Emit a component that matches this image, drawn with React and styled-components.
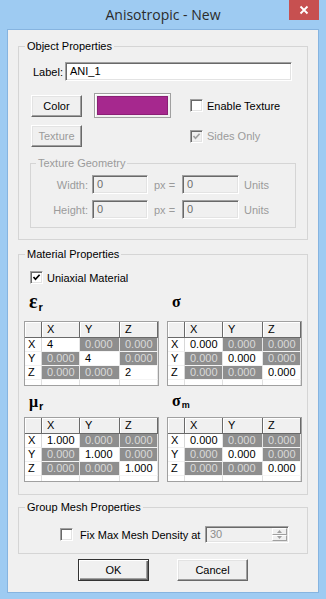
import React from "react";
import styled, { createGlobalStyle } from "styled-components";

const Global = createGlobalStyle`
  html, body { margin: 0; padding: 0; background: #9ecbf2; }
  body { font-family: "Liberation Sans", Arial, sans-serif; font-size: 11px; color: #000; }
  * { box-sizing: border-box; }
`;

const Window = styled.div`
  width: 326px;
  height: 599px;
  background: #9ecbf2;
  padding: 0 7px 6px;
  display: flex;
  flex-direction: column;
`;

const TitleBar = styled.div`
  height: 29px;
  flex: none;
  display: grid;
  grid-template-columns: 1fr auto 1fr;
  align-items: start;
`;

const Title = styled.div`
  grid-column: 2;
  font-family: "Open Sans", "Noto Sans", sans-serif;
  font-size: 14px;
  line-height: 29px;
  color: #2b2b2b;
  white-space: nowrap;
`;

const Close = styled.div`
  grid-column: 3;
  justify-self: end;
  width: 30px;
  height: 20px;
  background: #c75050;
  display: flex;
  align-items: center;
  justify-content: center;
`;

const Client = styled.div`
  flex: 1;
  background: #f0f0f0;
  border: 1px solid #86b4e0;
  padding: 10px 10px 0;
  display: flex;
  flex-direction: column;
`;

const Group = styled.fieldset`
  margin: ${(p) => p.$mt}px 0 0 ${(p) => p.$ml || 0}px;
  padding: 0 0 ${(p) => p.$pb}px;
  min-width: 0;
  width: ${(p) => (p.$w ? `${p.$w}px` : "auto")};
  border: 1px solid #d5d5d5;
`;

const Legend = styled.legend`
  margin-left: ${(p) => p.$ml ?? 6}px;
  padding: 0 2px;
  line-height: 13px;
  color: ${(p) => (p.$disabled ? "#9b9b9b" : "#000")};
`;

const LabelRow = styled.div`
  margin-top: 9px;
  padding: 0 14px;
  display: flex;
  align-items: center;
  height: 19px;
`;

const FieldLabel = styled.span`
  width: 32px;
  flex: none;
`;

const TextField = styled.div`
  width: ${(p) => p.$w}px;
  height: ${(p) => p.$h || 19}px;
  flex: none;
  background: ${(p) => (p.$disabled ? "#f0f0f0" : "#fff")};
  border: 1px solid;
  border-color: #a0a0a0 #fff #fff #a0a0a0;
  box-shadow: inset 1px 1px 0 #696969, inset -1px -1px 0 #e3e3e3;
  padding-left: 4px;
  line-height: ${(p) => (p.$h || 19) - 2}px;
  color: ${(p) => (p.$disabled ? "#6d6d6d" : "#000")};
  white-space: nowrap;
  overflow: hidden;
`;

const ControlGrid = styled.div`
  margin-top: 12px;
  padding-left: 12px;
  display: grid;
  grid-template-columns: 51px 77px 1fr;
  grid-template-rows: 25px 22px;
  column-gap: 12px;
  row-gap: 7px;
  align-items: center;
`;

const Button = styled.button`
  width: ${(p) => p.$w}px;
  height: 22px;
  margin: 0;
  padding: 0;
  font: inherit;
  background: #f0f0f0;
  border: 1px solid;
  border-color: ${(p) => (p.$default ? "#333" : "#fff #696969 #696969 #fff")};
  box-shadow: ${(p) =>
    p.$default
      ? "inset 1px 1px 0 #fff, inset -1px -1px 0 #696969, inset -2px -2px 0 #a0a0a0"
      : "inset -1px -1px 0 #a0a0a0, inset 1px 1px 0 #e3e3e3"};
  color: ${(p) => (p.disabled ? "#9b9b9b" : "#000")};
  display: flex;
  align-items: center;
  justify-content: center;
`;

const Swatch = styled.div`
  width: 77px;
  height: 25px;
  border: 1px solid #a0a0a0;
  box-shadow: inset 1px 1px 0 #fff;
  padding: 2px;
`;

const SwatchFill = styled.div`
  height: 100%;
  background: #a6288e;
  border: 1px solid #8a1f75;
`;

const CheckWrap = styled.label`
  display: flex;
  align-items: center;
  gap: ${(p) => p.$gap || 4}px;
  margin-left: ${(p) => p.$ml || 0}px;
  color: ${(p) => (p.$disabled ? "#9b9b9b" : "#000")};
  white-space: nowrap;
`;

const Box = styled.span`
  width: 13px;
  height: 13px;
  flex: none;
  background: ${(p) => (p.$disabled ? "#f0f0f0" : "#fff")};
  border: 1px solid;
  border-color: #a0a0a0 #fff #fff #a0a0a0;
  box-shadow: inset 1px 1px 0 #696969, inset -1px -1px 0 #e3e3e3;
  display: flex;
  align-items: center;
  justify-content: center;
`;

function Check({ label, checked, disabled, gap, ml }) {
  return (
    <CheckWrap $gap={gap} $ml={ml} $disabled={disabled}>
      <Box $disabled={disabled}>
        {checked && (
          <svg width="9" height="9" viewBox="0 0 9 9">
            <path
              d="M1.5 4 L3.5 6.3 L7.6 1.8"
              fill="none"
              stroke={disabled ? "#a0a0a0" : "#000"}
              strokeWidth="1.7"
            />
          </svg>
        )}
      </Box>
      <span>{label}</span>
    </CheckWrap>
  );
}

const GeoGrid = styled.div`
  margin-top: 5px;
  padding-bottom: 8px;
  display: grid;
  grid-template-columns: 61px 56px 34px 57px auto;
  grid-auto-rows: 19px;
  row-gap: 6px;
  align-items: center;
  color: #9b9b9b;
`;

const GeoLabel = styled.span`
  text-align: right;
  padding-right: 4px;
`;

const GeoText = styled.span`
  padding-left: ${(p) => p.$pl ?? 6}px;
`;

const CheckRow = styled.div`
  margin-top: 10px;
  padding-left: 11px;
  display: flex;
`;

const Quad = styled.div`
  padding-left: 5px;
  display: grid;
  grid-template-columns: 135px 135px;
  grid-template-rows: 37px 65px 31px 65px;
  column-gap: 8px;
`;

const SymCell = styled.div`
  display: flex;
  align-items: flex-end;
  padding: 0 0 ${(p) => p.$pb}px 5px;
`;

const Sym = styled.span`
  font-family: "Liberation Serif", "DejaVu Serif", serif;
  font-weight: bold;
  font-size: ${(p) => p.$size || 16}px;
  line-height: 20px;
  color: #000;
`;

const Sub = styled.span`
  font-family: "Liberation Sans", Arial, sans-serif;
  font-weight: bold;
  font-size: ${(p) => p.$size || 11}px;
  line-height: 0;
  vertical-align: -${(p) => p.$drop ?? 3}px;
  margin-left: 1px;
`;

const Table = styled.div`
  width: 135px;
  height: 65px;
  display: grid;
  grid-template-columns: 17px 38px 40px 38px;
  grid-template-rows: 16px repeat(3, 14px) 5px;
  border: 1px solid #a0a0a0;
  background: #fff;
  overflow: hidden;
`;

const HeadCell = styled.div`
  background: #f0f0f0;
  box-shadow: inset 1px 1px 0 #fff;
  border-right: 1px solid #696969;
  border-bottom: 1px solid #696969;
  padding-left: 5px;
  line-height: 15px;
`;

const RowHead = styled.div`
  border-right: 1px solid #d8d8d8;
  border-bottom: 1px solid #f0f0f0;
  padding-left: 3px;
  line-height: 13px;
`;

const Cell = styled.div`
  background: ${(p) => (p.$gray ? "#8e8e8e" : "#fff")};
  color: ${(p) => (p.$gray ? "#dadada" : "#000")};
  border-right: 1px solid #e6e6e6;
  border-bottom: 1px solid #f4f4f4;
  padding-left: 5px;
  line-height: 13px;
  white-space: nowrap;
  overflow: hidden;
`;

const Filler = styled.div`
  border-right: 1px solid #e0e0e0;
`;

function Matrix({ diag }) {
  const axes = ["X", "Y", "Z"];
  return (
    <Table>
      <HeadCell />
      {axes.map((a) => (
        <HeadCell key={a}>{a}</HeadCell>
      ))}
      {axes.map((r, i) => (
        <React.Fragment key={r}>
          <RowHead>{r}</RowHead>
          {axes.map((c, j) => (
            <Cell key={c} $gray={i !== j}>
              {i === j ? diag[i] : "0.000"}
            </Cell>
          ))}
        </React.Fragment>
      ))}
      <Filler />
      <Filler />
      <Filler />
      <Filler />
    </Table>
  );
}

const MeshRow = styled.div`
  margin-top: 12px;
  padding: 0 18px 0 41px;
  height: 17px;
  display: flex;
  align-items: center;
`;

const Spin = styled.div`
  margin-left: auto;
  width: 84px;
  height: 17px;
  background: #f0f0f0;
  border: 1px solid;
  border-color: #a0a0a0 #fff #fff #a0a0a0;
  box-shadow: inset 1px 1px 0 #696969, inset -1px -1px 0 #e3e3e3;
  display: flex;
  align-items: stretch;
  padding: 1px 1px 1px 0;
`;

const SpinText = styled.span`
  flex: 1;
  padding-left: 4px;
  line-height: 13px;
  color: #8d8d8d;
`;

const SpinButtons = styled.div`
  width: 15px;
  display: flex;
  flex-direction: column;
`;

const SpinBtn = styled.div`
  flex: 1;
  background: #f0f0f0;
  border: 1px solid;
  border-color: #fff #a0a0a0 #a0a0a0 #fff;
  display: flex;
  align-items: center;
  justify-content: center;
`;

const ButtonRow = styled.div`
  margin-top: 5px;
  display: flex;
  justify-content: center;
  gap: 28px;
`;

export default function App() {
  return (
    <>
      <Global />
      <Window>
        <TitleBar>
          <Title>Anisotropic - New</Title>
          <Close>
            <svg width="10" height="10" viewBox="0 0 10 10">
              <path d="M1.5 1.5L8.5 8.5M8.5 1.5L1.5 8.5" stroke="#fff" strokeWidth="1.8" />
            </svg>
          </Close>
        </TitleBar>
        <Client>
          <Group $mt={0} $pb={11}>
            <Legend>Object Properties</Legend>
            <LabelRow>
              <FieldLabel>Label:</FieldLabel>
              <TextField $w={227}>ANI_1</TextField>
            </LabelRow>
            <ControlGrid>
              <Button $w={51}>Color</Button>
              <Swatch>
                <SwatchFill />
              </Swatch>
              <Check label="Enable Texture" ml={7} />
              <Button $w={51} disabled>
                Texture
              </Button>
              <span />
              <Check label="Sides Only" checked disabled ml={7} />
            </ControlGrid>
            <Group $mt={10} $ml={11} $w={266} $pb={0}>
              <Legend $disabled $ml={5}>
                Texture Geometry
              </Legend>
              <GeoGrid>
                <GeoLabel>Width:</GeoLabel>
                <TextField $w={56} $disabled>0</TextField>
                <GeoText>px =</GeoText>
                <TextField $w={57} $disabled>0</TextField>
                <GeoText $pl={5}>Units</GeoText>
                <GeoLabel>Height:</GeoLabel>
                <TextField $w={56} $disabled>0</TextField>
                <GeoText>px =</GeoText>
                <TextField $w={57} $disabled>0</TextField>
                <GeoText $pl={5}>Units</GeoText>
              </GeoGrid>
            </Group>
          </Group>

          <Group $mt={8} $pb={12}>
            <Legend>Material Properties</Legend>
            <CheckRow>
              <Check label="Uniaxial Material" checked />
            </CheckRow>
            <Quad>
              <SymCell $pb={10}>
                <Sym $size={20}>
                  ε<Sub>r</Sub>
                </Sym>
              </SymCell>
              <SymCell $pb={9}>
                <Sym $size={16}>σ</Sym>
              </SymCell>
              <Matrix diag={["4", "4", "2"]} />
              <Matrix diag={["0.000", "0.000", "0.000"]} />
              <SymCell $pb={5}>
                <Sym $size={16}>
                  μ<Sub>r</Sub>
                </Sym>
              </SymCell>
              <SymCell $pb={6}>
                <Sym $size={16}>
                  σ<Sub $size={9} $drop={2}>m</Sub>
                </Sym>
              </SymCell>
              <Matrix diag={["1.000", "1.000", "1.000"]} />
              <Matrix diag={["0.000", "0.000", "0.000"]} />
            </Quad>
          </Group>

          <Group $mt={6} $pb={10}>
            <Legend>Group Mesh Properties</Legend>
            <MeshRow>
              <Check label="Fix Max Mesh Density at" gap={7} />
              <Spin>
                <SpinText>30</SpinText>
                <SpinButtons>
                  <SpinBtn>
                    <svg width="5" height="3" viewBox="0 0 5 3">
                      <path d="M0 3L2.5 0L5 3Z" fill="#a0a0a0" />
                    </svg>
                  </SpinBtn>
                  <SpinBtn>
                    <svg width="5" height="3" viewBox="0 0 5 3">
                      <path d="M0 0L2.5 3L5 0Z" fill="#a0a0a0" />
                    </svg>
                  </SpinBtn>
                </SpinButtons>
              </Spin>
            </MeshRow>
          </Group>

          <ButtonRow>
            <Button $w={71} $default>
              OK
            </Button>
            <Button $w={71}>Cancel</Button>
          </ButtonRow>
        </Client>
      </Window>
    </>
  );
}
